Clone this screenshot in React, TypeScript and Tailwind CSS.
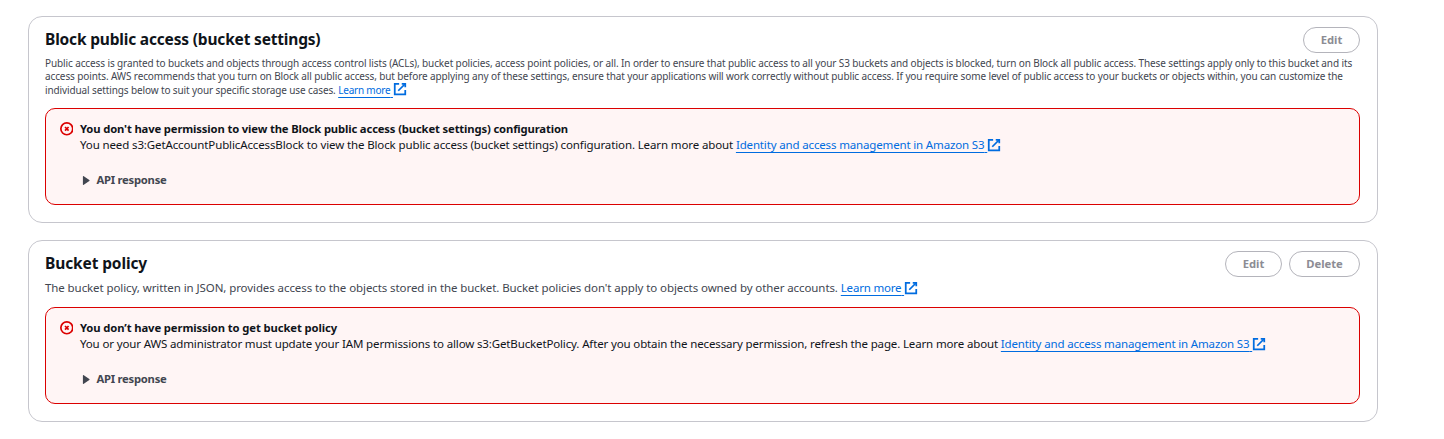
import type { ReactNode } from "react";

function ExternalIcon() {
  return (
    <svg className="inline-block size-[14px] shrink-0 align-[-2.5px]" viewBox="0 0 16 16" fill="none" stroke="currentColor" strokeWidth="2">
      <path d="M10 2h4v4" />
      <path d="m6 10 8-8" />
      <path d="M14 9.05V14H2V2h5" />
    </svg>
  );
}

function ErrorIcon() {
  return (
    <svg className="mt-[13px] size-[13.6px] shrink-0 text-[#db0000]" viewBox="0 0 16 16" fill="none" stroke="currentColor" strokeWidth="2">
      <circle cx="8" cy="8" r="7" />
      <path d="m10.1 5.9-4.2 4.2M10.1 10.1 5.9 5.9" />
    </svg>
  );
}

function ExternalLink({ children, tracking }: { children: ReactNode; tracking: string }) {
  return (
    <a href="#" className="whitespace-nowrap text-[#006ce0]">
      <span className={`underline decoration-1 underline-offset-[3px] [text-decoration-skip-ink:none] ${tracking}`}>
        {children}&nbsp;
      </span>
      <ExternalIcon />
    </a>
  );
}

function Button({ children, width }: { children: ReactNode; width: string }) {
  return (
    <button
      disabled
      className={`flex h-[26px] items-center justify-center rounded-full border border-[#b4b4bb] pb-px text-[11.25px] font-bold leading-none text-[#8c8c94] ${width}`}
    >
      {children}
    </button>
  );
}

function Card({ children, height }: { children: ReactNode; height: string }) {
  return (
    <section className={`w-[1350px] rounded-[14px] border border-[#c6c6cd] pl-4 pr-[17px] pt-[10px] ${height}`}>
      {children}
    </section>
  );
}

function Alert({ title, titleTracking, children }: { title: string; titleTracking: string; children: ReactNode }) {
  return (
    <div className="flex h-[97px] w-[1315px] gap-[6.9px] rounded-[10px] border border-[#db0000] bg-[#fff5f5] pl-[13.5px] text-[11.5px] leading-4 text-[#0f141a]">
      <ErrorIcon />
      <div className="pt-3">
        <p className={`whitespace-nowrap text-[11.25px] font-bold ${titleTracking}`}>{title}</p>
        <p className="whitespace-nowrap">{children}</p>
        <div className="mt-[19px] flex items-center gap-[6.5px] pl-[2px] text-[#424650]">
          <svg className="h-[9px] w-[8px]" viewBox="0 0 8 9" fill="currentColor">
            <path d="M.9.6v7.8c0 .5.5.7.9.4L7.3 5c.4-.3.4-.7 0-1L1.8.2C1.4-.1.9.1.9.6Z" />
          </svg>
          <span className="text-[11.25px] font-bold tracking-[-0.25px]">API response</span>
        </div>
      </div>
    </div>
  );
}

export default function App() {
  return (
    <main className="flex h-[439px] flex-col gap-[17px] overflow-hidden bg-white pl-7 pt-4 font-['Noto_Sans',sans-serif]">
      <Card height="h-[207px]">
        <div className="flex h-[26px] justify-between">
          <h2 className="text-[15.5px] font-bold leading-6 tracking-[-0.18px] text-[#0f141a]">
            Block public access (bucket settings)
          </h2>
          <Button width="w-[57px]">Edit</Button>
        </div>
        <div className="mb-[12px] mt-1 h-[39px] whitespace-nowrap text-[10px] leading-[13px] text-[#424650]">
          <p className="tracking-[-0.11px]">
            Public access is granted to buckets and objects through access control lists (ACLs), bucket policies, access point policies, or all. In order to ensure that public access to all your S3 buckets and objects is blocked, turn on Block all public access. These settings apply only to this bucket and its
          </p>
          <p className="tracking-[-0.116px]">
            access points. AWS recommends that you turn on Block all public access, but before applying any of these settings, ensure that your applications will work correctly without public access. If you require some level of public access to your buckets or objects within, you can customize the
          </p>
          <p className="-mt-px h-[13px] tracking-[-0.115px]">
            individual settings below to suit your specific storage use cases.{" "}
            <ExternalLink tracking="tracking-[-0.2px]">Learn more</ExternalLink>
          </p>
        </div>
        <Alert
          title="You don't have permission to view the Block public access (bucket settings) configuration"
          titleTracking="tracking-[-0.143px]"
        >
          <span className="tracking-[-0.121px]">
            You need s3:GetAccountPublicAccessBlock to view the Block public access (bucket settings) configuration. Learn more about{" "}
          </span>
          <ExternalLink tracking="tracking-[-0.153px]">Identity and access management in Amazon S3</ExternalLink>
        </Alert>
      </Card>

      <Card height="h-[182px]">
        <div className="flex h-[26px] justify-between">
          <h2 className="text-[15.5px] font-bold leading-6 tracking-[-0.12px] text-[#0f141a]">Bucket policy</h2>
          <div className="flex gap-[7px]">
            <Button width="w-[57px]">Edit</Button>
            <Button width="w-[71px]">Delete</Button>
          </div>
        </div>
        <p className="mb-[11px] mt-[3px] h-4 whitespace-nowrap text-[11.5px] leading-4 tracking-[-0.088px] text-[#424650]">
          The bucket policy, written in JSON, provides access to the objects stored in the bucket. Bucket policies don't apply to objects owned by other accounts.{" "}
          <ExternalLink tracking="tracking-[-0.2px]">Learn more</ExternalLink>
        </p>
        <Alert title="You don’t have permission to get bucket policy" titleTracking="tracking-[-0.106px]">
          <span className="tracking-[-0.139px]">
            You or your AWS administrator must update your IAM permissions to allow s3:GetBucketPolicy. After you obtain the necessary permission, refresh the page. Learn more about{" "}
          </span>
          <ExternalLink tracking="tracking-[-0.153px]">Identity and access management in Amazon S3</ExternalLink>
        </Alert>
      </Card>
    </main>
  );
}
